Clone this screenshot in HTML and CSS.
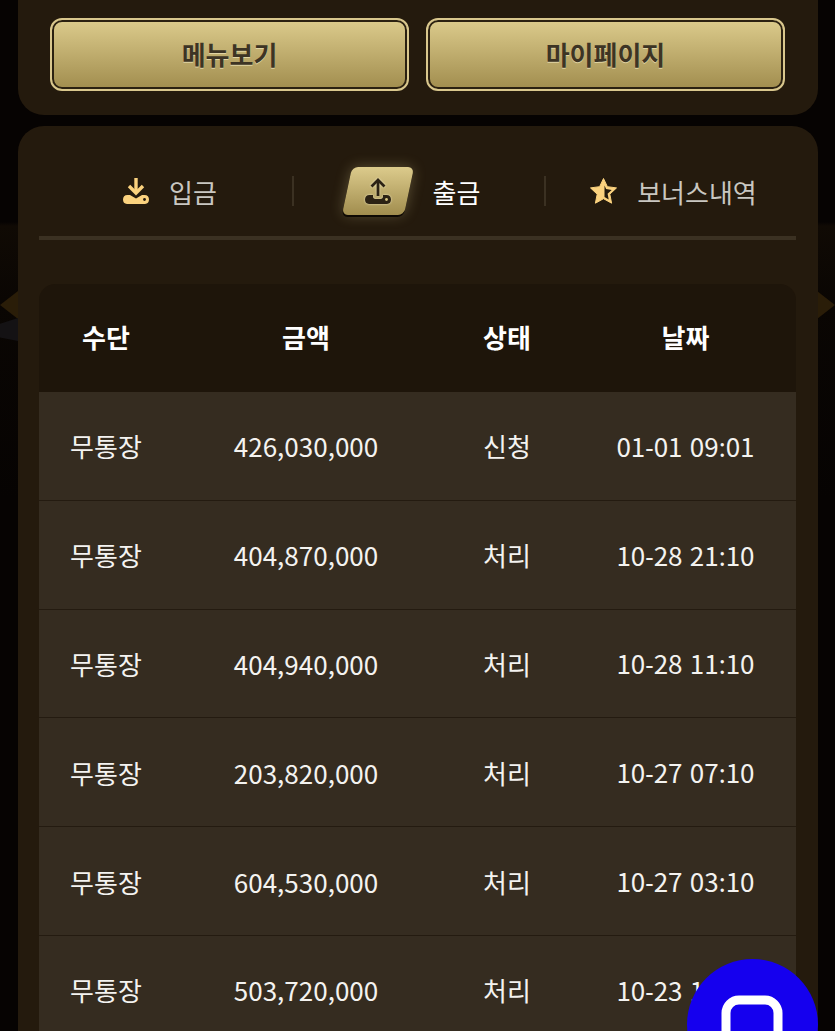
FILE: index.html
```html
<!DOCTYPE html>
<html lang="ko">
  <head>
    <meta charset="UTF-8" />
    <meta name="viewport" content="width=device-width, initial-scale=1.0" />
    <title>출금</title>
    <link rel="stylesheet" href="styles.css">
  </head>
  <body>
    <div class="side-deco side-left"></div>
    <div class="side-deco side-right"></div>
    <div class="side-patch"></div>

    <section class="card top-card">
      <a class="gold-btn">메뉴보기</a>
      <a class="gold-btn">마이페이지</a>
    </section>

    <section class="card list-card">
      <nav class="tabs">
        <a class="tab tab-in">
          <svg class="tab-icon" viewBox="0 0 28 28">
            <path d="M14 1v13" fill="none" stroke="#fbd27e" stroke-width="3.400"/>
            <path d="M7 9l7 7 7-7" fill="none" stroke="#fbd27e" stroke-width="3.400"/>
            <path d="M5 27a4.500 4.500 0 0 1-4-4.500c0-2.500 1.500-4.500 4.500-4.500H8l6 3.500 6-3.500h2.500c3 0 4.500 2 4.500 4.500A4.500 4.500 0 0 1 23 27z" fill="#fbd27e"/>
            <circle cx="22.500" cy="22.500" r="1.400" fill="#241a0d"/>
          </svg>
          <span>입금</span>
        </a>
        <i class="tab-sep"></i>
        <a class="tab tab-out">
          <span class="tab-badge">
            <svg class="tab-icon" viewBox="0 0 28 28">
              <path d="M14 19V3" fill="none" stroke="#2c2214" stroke-width="2.800"/>
              <path d="M7.500 9.500L14 3l6.500 6.500" fill="none" stroke="#2c2214" stroke-width="2.800"/>
              <path d="M5 27a4.500 4.500 0 0 1-4-4.500c0-2.500 1.500-4.500 4.500-4.500H9v1.500c0 1.500 1 2.500 2.500 2.500h5c1.500 0 2.500-1 2.500-2.500V18h3.500c3 0 4.500 2 4.500 4.500A4.500 4.500 0 0 1 23 27z" fill="#2c2214"/>
              <circle cx="22.500" cy="22.500" r="1.400" fill="#d8c683"/>
            </svg>
          </span>
          <span>출금</span>
        </a>
        <i class="tab-sep"></i>
        <a class="tab tab-bonus">
          <svg class="tab-icon" viewBox="-1 0 28 28">
            <path d="M13.500 1.500l3.900 8.200 9.100 1.200-6.700 6.300 1.800 9-8.100-4.500-8.100 4.500 1.800-9L.5 10.900l9.100-1.200z" fill="#fbd27e" stroke="#fbd27e" stroke-linejoin="round"/>
            <path d="M14.500 8.500l1.600 3.600 5.600.8-4.100 3.900 1.100 5.600-4.200-2.300z" fill="#241a0d"/>
          </svg>
          <span>보너스내역</span>
        </a>
      </nav>

      <table class="history">
        <thead>
          <tr><th>수단</th><th>금액</th><th>상태</th><th>날짜</th></tr>
        </thead>
        <tbody>
          <tr><td>무통장</td><td>426,030,000</td><td>신청</td><td>01<span class="sep">-</span>01 09<span class="sep">:</span>01</td></tr>
          <tr><td>무통장</td><td>404,870,000</td><td>처리</td><td>10<span class="sep">-</span>28 21<span class="sep">:</span>10</td></tr>
          <tr><td>무통장</td><td>404,940,000</td><td>처리</td><td>10<span class="sep">-</span>28 11<span class="sep">:</span>10</td></tr>
          <tr><td>무통장</td><td>203,820,000</td><td>처리</td><td>10<span class="sep">-</span>27 07<span class="sep">:</span>10</td></tr>
          <tr><td>무통장</td><td>604,530,000</td><td>처리</td><td>10<span class="sep">-</span>27 03<span class="sep">:</span>10</td></tr>
          <tr><td>무통장</td><td>503,720,000</td><td>처리</td><td>10<span class="sep">-</span>23 16<span class="sep">:</span>10</td></tr>
        </tbody>
      </table>
    </section>

    <a class="chat-fab">
      <svg viewBox="0 0 131 72"><rect x="39" y="41" width="52" height="60" rx="13" fill="none" stroke="#fff" stroke-width="9"/></svg>
    </a>
  </body>
</html>
```

FILE: styles.css
```css
body {
  margin: 0;
  height: 1031px;
  overflow: hidden;
  position: relative;
  padding: 0 17px 0 18px;
  box-sizing: border-box;
  background: linear-gradient(#060302 0, #060302 222px, #100a04 226px, #0a0603 300px, #060302 500px);
  font-family: "Noto Sans CJK KR", "Noto Sans", sans-serif;
  color: #fff;
}
a {
  text-decoration: none;
  color: inherit;
}

.side-deco {
  position: absolute;
  top: 291px;
  width: 18px;
  height: 28px;
  background: #2a1d08;
}
.side-left {
  left: 0;
  clip-path: polygon(100% 0, 100% 100%, 0 50%);
}
.side-right {
  right: 0;
  clip-path: polygon(0 0, 0 100%, 100% 50%);
}
.side-patch {
  position: absolute;
  left: 0;
  top: 318px;
  width: 18px;
  height: 23px;
  background: #141214;
  clip-path: polygon(0 25%, 100% 0, 100% 100%, 0 85%);
}

.card {
  position: relative;
  background: #241a0d;
}
.top-card {
  display: flex;
  gap: 17px;
  height: 115px;
  box-sizing: border-box;
  padding: 18px 33px 0 32px;
  border-radius: 0 0 26px 26px;
}
.gold-btn {
  flex: 1;
  height: 73px;
  box-sizing: border-box;
  display: flex;
  align-items: center;
  justify-content: center;
  padding-bottom: 2px;
  border-radius: 12px;
  border: 2px solid #d9c78d;
  box-shadow: inset 0 0 0 2px #2b2111;
  background: linear-gradient(#dccb8c, #a18d4e);
  background-clip: padding-box;
  color: #3d3424;
  font-size: 26px;
  font-weight: 700;
  text-shadow: 0 1px 0 #e0d4a4;
}

.list-card {
  margin-top: 11px;
  height: 905px;
  padding: 0 22px 0 21px;
  border-radius: 26px 26px 0 0;
}
.tabs {
  display: flex;
  align-items: center;
  height: 114px;
  padding-top: 20px;
  box-sizing: border-box;
  border-bottom: 4px solid #3b3122;
}
.tab {
  display: flex;
  align-items: center;
  justify-content: center;
  color: #c9c7c1;
  font-size: 26px;
  height: 50px;
}
.tab-in {
  width: 253px;
  gap: 19px;
  padding-left: 8px;
  box-sizing: border-box;
}
.tab-out {
  width: 250px;
  gap: 24px;
  padding-right: 11px;
  box-sizing: border-box;
  color: #fff;
}
.tab-bonus {
  flex: 1;
  gap: 20px;
  padding-left: 4px;
  box-sizing: border-box;
}
.tab-sep {
  width: 2px;
  height: 30px;
  background: #3b3122;
}
.tab-icon {
  width: 28px;
  height: 28px;
}
.tab-badge {
  width: 62px;
  height: 48px;
  display: flex;
  align-items: center;
  justify-content: center;
  border-radius: 6px;
  background: linear-gradient(#dccb8c, #a18d4e);
  transform: skewX(-12deg);
  box-shadow: 0 2px 0 #0e0903, 0 0 14px rgba(222, 205, 145, 0.3);
}
.tab-badge .tab-icon {
  transform: skewX(12deg);
  filter: drop-shadow(0 0 1px #efe6bd);
}

.history {
  width: 757px;
  margin-top: 44px;
  border-collapse: separate;
  border-spacing: 0;
  table-layout: fixed;
  text-align: center;
}
.history th {
  height: 108px;
  padding: 0 0 4px;
  box-sizing: border-box;
  background: #1e150a;
  font-size: 26px;
  font-weight: 700;
}
.history th:first-child {
  border-top-left-radius: 16px;
  width: 134px;
}
.history th:nth-child(2) {
  width: 266px;
}
.history th:nth-child(3) {
  width: 136px;
}
.history th:last-child {
  border-top-right-radius: 16px;
}
.history td {
  height: 108.800px;
  padding: 0;
  box-sizing: border-box;
  background: #352c20;
  border-bottom: 1px solid #241b10;
  font-size: 26px;
  color: #f4f3f0;
}
.sep {
  font-family: "Noto Sans", sans-serif;
}

.chat-fab {
  position: fixed;
  left: 687px;
  top: 959px;
  width: 131px;
  height: 131px;
  border-radius: 50%;
  background: #1500ee;
}
.chat-fab svg {
  display: block;
  width: 131px;
  height: 72px;
}
```
